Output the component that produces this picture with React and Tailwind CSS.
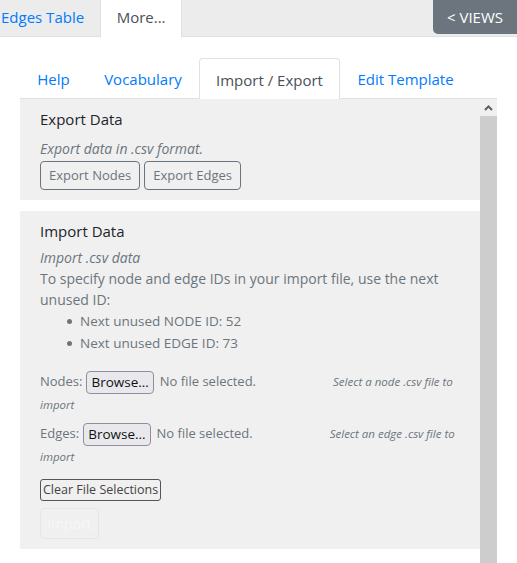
import React from 'react';

const FONT = "font-['Open_Sans',sans-serif]";

const FileRow = ({ label, hint }) => (
  <div className="mt-[6px]">
    <div className="flex items-center h-[26px]">
      <span className="text-[13px] text-[#6c757d]">{label}</span>
      <span className="ml-[4px] h-[23px] px-[4px] flex items-center bg-[#e9e9ed] border border-[#8f8f9d] rounded-[4px] text-[13.5px] text-[#111]">
        Browse…
      </span>
      <span className="ml-[6px] text-[13px] text-[#6c757d]">No file selected.</span>
      <span className="ml-[77px] text-[11.5px] italic text-[#6c757d]">{hint}</span>
    </div>
    <div className="text-[11.5px] italic text-[#6c757d] leading-[20px]">import</div>
  </div>
);

const App = () => {
  return (
    <div className={`w-[517px] h-[563px] bg-white overflow-hidden ${FONT}`}>
      {/* top tab bar */}
      <div className="flex h-[37px] bg-[#ececec] border-b border-[#dee2e6]">
        <div className="h-[35px] pl-[1px] pr-[16px] flex items-center text-[15px] text-[#007bff]">
          Edges Table
        </div>
        <div className="h-[37px] w-[82px] pb-[2px] bg-white border-x border-[#dee2e6] flex items-center justify-center text-[15px] text-[#495057]">
          More...
        </div>
        <div className="flex-1" />
        <div className="h-[34px] w-[84px] bg-[#6c757d] rounded-bl-[5px] flex items-center justify-center text-[15px] text-white">
          &lt; VIEWS
        </div>
      </div>

      {/* sub tabs */}
      <div className="mt-[21px] ml-[20px] w-[477px] flex h-[41px] border-b border-[#dee2e6]">
        <div className="w-[67px] pt-[3px] flex items-center justify-center text-[15px] text-[#007bff]">Help</div>
        <div className="w-[112px] pt-[3px] flex items-center justify-center text-[15px] text-[#007bff]">Vocabulary</div>
        <div className="w-[141px] h-[41px] pt-[3px] bg-white border border-b-0 border-[#dee2e6] rounded-t-[4px] flex items-center justify-center text-[15px] text-[#495057]">
          Import / Export
        </div>
        <div className="w-[131px] pt-[3px] flex items-center justify-center text-[15px] text-[#007bff]">Edit Template</div>
      </div>

      {/* scroll area */}
      <div className="ml-[20px] w-[477px] h-[465px] flex">
        <div className="flex-1">
          <div className="bg-[#f0f0f0] px-[20px] pt-[8px] pb-[10px]">
            <div className="text-[15px] text-[#212529] leading-[24px]">Export Data</div>
            <div className="mt-[8px] text-[14px] italic text-[#6c757d] leading-[20px]">Export data in .csv format.</div>
            <div className="flex gap-[4px] mt-[2px]">
              <span className="h-[29px] px-[8px] flex items-center border border-[#6c757d] rounded-[4px] text-[13px] text-[#6c757d]">Export Nodes</span>
              <span className="h-[29px] px-[8px] flex items-center border border-[#6c757d] rounded-[4px] text-[13px] text-[#6c757d]">Export Edges</span>
            </div>
          </div>

          <div className="mt-[11px] bg-[#f0f0f0] px-[20px] pt-[8px] pb-[10px]">
            <div className="text-[15px] text-[#212529] leading-[24px]">Import Data</div>
            <div className="mt-[4px] text-[14px] italic text-[#6c757d] leading-[21px]">Import .csv data</div>
            <div className="text-[14px] text-[#6c757d] leading-[21px]">
              To specify node and edge IDs in your import file, use the next
              <br />
              unused ID:
            </div>
            <ul className="pl-[27px] text-[13.5px] text-[#6c757d] leading-[22px]">
              <li className="flex items-center gap-[8px]"><span className="w-[5px] h-[5px] rounded-full bg-[#6c757d]" />Next unused NODE ID: 52</li>
              <li className="flex items-center gap-[8px]"><span className="w-[5px] h-[5px] rounded-full bg-[#6c757d]" />Next unused EDGE ID: 73</li>
            </ul>

            <div className="mt-[15px]">
              <FileRow label="Nodes:" hint="Select a node .csv file to" />
              <FileRow label="Edges:" hint="Select an edge .csv file to" />
            </div>

            <div className="mt-[9px]">
              <span className="inline-flex h-[22px] px-[2px] items-center border border-[#555] rounded-[3px] text-[12.5px] text-[#444]">Clear File Selections</span>
            </div>
            <div className="mt-[7px]">
              <span className="inline-flex h-[31px] w-[59px] justify-center items-center border border-[#e6e6e6] rounded-[4px] text-[14px] text-[#f7f7f7]">Import</span>
            </div>
          </div>
        </div>

        {/* scrollbar */}
        <div className="w-[17px] flex flex-col">
          <div className="h-[17px] bg-[#f0f0f0] flex items-center justify-center">
            <svg width="9" height="6" viewBox="0 0 9 6">
              <path d="M1 5 L4.5 1.5 L8 5" stroke="#606060" strokeWidth="2" fill="none" />
            </svg>
          </div>
          <div className="flex-1 bg-[#cdcdcd]" />
        </div>
      </div>
    </div>
  );
};

export default App;
